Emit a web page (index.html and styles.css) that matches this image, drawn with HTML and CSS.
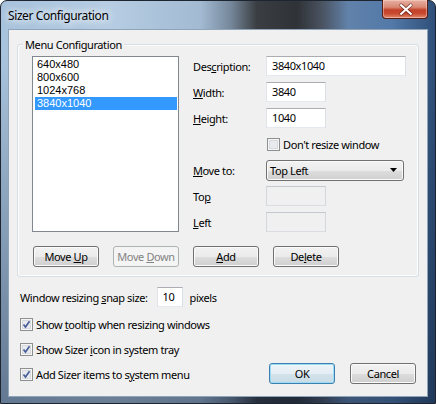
FILE: index.html
```html
<!DOCTYPE html>
<html>
<head>
<meta charset="utf-8">
<link rel="stylesheet" href="styles.css">
</head>
<body>
<div class="window">
  <div class="titlebar">
    <span class="title">Sizer Configuration</span>
    <div class="close">
      <svg width="46" height="19" viewBox="0 0 46 19">
        <path d="M19 5 L29 14 M29 5 L19 14" stroke="#3a0f08" stroke-width="4" stroke-linecap="round" opacity="0.55"/>
        <path d="M19 5 L29 14 M29 5 L19 14" stroke="#ffffff" stroke-width="2.2" stroke-linecap="square"/>
      </svg>
    </div>
  </div>
  <div class="client">
    <div class="group">
      <span class="group-title">Menu Configuration</span>
      <div class="group-top">
        <div class="listbox">
          <div class="item">640x480</div>
          <div class="item">800x600</div>
          <div class="item">1024x768</div>
          <div class="item sel">3840x1040</div>
        </div>
        <div class="form">
          <span class="lbl">Des<u>c</u>ription:</span>
          <div class="tb wide">3840x1040</div>
          <span class="lbl"><u>W</u>idth:</span>
          <div class="tb small">3840</div>
          <span class="lbl"><u>H</u>eight:</span>
          <div class="tb small">1040</div>
          <span></span>
          <div class="check">
            <svg class="cb" width="13" height="13" viewBox="0 0 13 13">
              <rect x="0.5" y="0.5" width="12" height="12" fill="#f6f6f6" stroke="#8e8f8f"/>
              <rect x="2" y="2" width="9" height="9" fill="#d6d9de"/>
              <rect x="3" y="3" width="7" height="7" fill="#e8eaed"/>
            </svg>
            <span>Don't resize window</span>
          </div>
          <span class="lbl"><u>M</u>ove to:</span>
          <div class="combo">
            <span>Top Left</span>
            <svg width="7" height="4" viewBox="0 0 7 4"><path d="M0 0 H7 L3.5 4 Z" fill="#000"/></svg>
          </div>
          <span class="lbl">To<u>p</u></span>
          <div class="tb small disabled"></div>
          <span class="lbl"><u>L</u>eft</span>
          <div class="tb small disabled"></div>
        </div>
      </div>
      <div class="btn-row">
        <button class="btn">Move <u>U</u>p</button>
        <button class="btn disabled">Move <u>D</u>own</button>
        <button class="btn"><u>A</u>dd</button>
        <button class="btn">De<u>l</u>ete</button>
      </div>
    </div>
    <div class="snap-row">
      <span>Window resizing <u>s</u>nap size:</span>
      <div class="tb snap">10</div>
      <span>pixels</span>
    </div>
    <div class="check row1">
      <svg class="cb" width="13" height="13" viewBox="0 0 13 13">
        <rect x="0.5" y="0.5" width="12" height="12" fill="#f6f6f6" stroke="#8e8f8f"/>
        <rect x="2" y="2" width="9" height="9" fill="#d6d9de"/>
        <rect x="3" y="3" width="7" height="7" fill="#e8eaed"/>
        <path d="M3.5 6.5 L5.5 9 L9.5 3.2" fill="none" stroke="#4a5e9a" stroke-width="1.7"/>
      </svg>
      <span>Show <u>t</u>ooltip when resizing windows</span>
    </div>
    <div class="check row2">
      <svg class="cb" width="13" height="13" viewBox="0 0 13 13">
        <rect x="0.5" y="0.5" width="12" height="12" fill="#f6f6f6" stroke="#8e8f8f"/>
        <rect x="2" y="2" width="9" height="9" fill="#d6d9de"/>
        <rect x="3" y="3" width="7" height="7" fill="#e8eaed"/>
        <path d="M3.5 6.5 L5.5 9 L9.5 3.2" fill="none" stroke="#4a5e9a" stroke-width="1.7"/>
      </svg>
      <span>Show Sizer <u>i</u>con in system tray</span>
    </div>
    <div class="bottom-row">
      <div class="check">
        <svg class="cb" width="13" height="13" viewBox="0 0 13 13">
          <rect x="0.5" y="0.5" width="12" height="12" fill="#f6f6f6" stroke="#8e8f8f"/>
          <rect x="2" y="2" width="9" height="9" fill="#d6d9de"/>
          <rect x="3" y="3" width="7" height="7" fill="#e8eaed"/>
          <path d="M3.5 6.5 L5.5 9 L9.5 3.2" fill="none" stroke="#4a5e9a" stroke-width="1.7"/>
        </svg>
        <span>Add Sizer items to s<u>y</u>stem menu</span>
      </div>
      <div class="dlg-btns">
        <button class="btn default">OK</button>
        <button class="btn">Cancel</button>
      </div>
    </div>
  </div>
</div>
</body>
</html>
```
FILE: styles.css
```css
body {
  margin: 0;
  font-family: "Noto Sans", "Open Sans", sans-serif;
  font-size: 11px;
  letter-spacing: -0.4px;
  color: #000;
}

.window {
  width: 436px;
  height: 404px;
  box-sizing: border-box;
  border: 1px solid #1c2530;
  border-radius: 7px 7px 0 0;
  padding: 0 7px 6px;
  display: flex;
  flex-direction: column;
  background:
    linear-gradient(to bottom, rgba(0,0,0,0) 0, rgba(0,0,0,0) 60px, rgba(15,30,55,0.45) 100%),
    linear-gradient(to right, #a7c2dc 0%, #b6cde3 25%, #a2bad2 46%, #75879a 53%, #3a3d41 59%, #2f3236 68%, #4a5361 74%, #6182aa 80%, #5279a8 90%, #2f4f78 100%);
}

.titlebar {
  height: 28px;
  display: flex;
  justify-content: space-between;
  align-items: center;
}

.title {
  font-size: 12px;
  padding-top: 1px;
  text-shadow: 0 0 6px #e8f1fa, 0 0 10px #e8f1fa, 0 0 14px rgba(255,255,255,0.8);
}

.close {
  align-self: flex-start;
  margin-top: -1px;
  width: 46px;
  height: 19px;
  box-sizing: border-box;
  border: 1px solid #5a1d14;
  border-top: none;
  border-radius: 0 0 4px 4px;
  background: linear-gradient(to bottom, #e7b0a3 0%, #d98873 40%, #c3412a 55%, #c9492f 75%, #e08a6c 100%);
  box-shadow: inset 0 0 0 1px rgba(255,220,210,0.45);
  display: flex;
}

.client {
  flex: 1;
  background: #f0f0f0;
  border: 1px solid #8fa3b9;
  padding: 14px 8px 0 8px;
  display: flex;
  flex-direction: column;
}

.group {
  position: relative;
  border: 1px solid #d5dfe5;
  border-radius: 3px;
  box-shadow: inset 0 0 0 1px #fcfcfc;
  padding: 11px 11px 9px 14px;
}

.group-title {
  position: absolute;
  top: -8px;
  left: 5px;
  padding: 0 2px;
  line-height: 15px;
  background: #f0f0f0;
}

.group-top {
  display: flex;
  gap: 14px;
  height: 176px;
}

.listbox {
  width: 147px;
  height: 176px;
  box-sizing: border-box;
  border: 1px solid #828790;
  background: #fff;
  padding: 1px 1px;
}

.item {
  height: 13px;
  line-height: 13px;
  padding-left: 2px;
  margin-left: 1px;
  white-space: nowrap;
  font-family: "Liberation Sans", Arial, sans-serif;
  font-size: 11px;
  letter-spacing: 0;
}

.item.sel {
  background: #3399ff;
  color: #fff;
}

.form {
  display: grid;
  grid-template-columns: 73px auto;
  grid-auto-rows: 20px;
  row-gap: 6px;
  align-items: center;
  align-content: start;
}

.tb {
  height: 20px;
  box-sizing: border-box;
  border: 1px solid;
  border-color: #abadb3 #dbdfe6 #e3e9ef #e2e3ea;
  background: #fff;
  padding-left: 5px;
  line-height: 18px;
}

.tb.wide { width: 140px; }
.tb.small { width: 60px; }
.tb.snap { width: 26px; padding-left: 5px; }

.tb.disabled {
  background: #f0f0f0;
  border-color: #c3c8ce #d4d8dc #d9dde1 #d4d8dc;
}

.check {
  display: flex;
  align-items: center;
  gap: 3px;
  padding-left: 1px;
  white-space: nowrap;
}

.cb { flex: none; display: block; }

.combo {
  width: 138px;
  height: 21px;
  box-sizing: border-box;
  border: 1px solid #707070;
  border-radius: 3px;
  background: linear-gradient(to bottom, #f2f2f2 0%, #ebebeb 50%, #dddddd 51%, #cfcfcf 100%);
  box-shadow: inset 0 0 0 1px #fbfbfb;
  display: flex;
  align-items: center;
  justify-content: space-between;
  padding: 0 6px 0 3px;
}

.combo svg { display: block; }

.btn-row {
  display: flex;
  gap: 14px;
  margin-top: 14px;
  padding-left: 1px;
}

.btn {
  width: 66px;
  height: 21px;
  box-sizing: border-box;
  border: 1px solid #707070;
  border-radius: 3px;
  background: linear-gradient(to bottom, #f2f2f2 0%, #ebebeb 50%, #dddddd 51%, #cfcfcf 100%);
  box-shadow: inset 0 0 0 1px #fbfbfb;
  font-family: inherit;
  font-size: 11px;
  letter-spacing: -0.4px;
  color: #000;
  padding: 0;
  line-height: 18px;
  text-align: center;
  white-space: nowrap;
}

.btn.disabled {
  border-color: #adb2b5;
  background: #f4f4f4;
  box-shadow: none;
  color: #838383;
}

.btn.default {
  border-color: #3c7fb1;
  box-shadow: inset 0 0 0 1px #9ddcf3;
  background: linear-gradient(to bottom, #eef5f9 0%, #e4eef4 50%, #d4e3eb 51%, #c8dbe5 100%);
}

.snap-row {
  display: flex;
  align-items: center;
  height: 20px;
  margin-top: 10px;
  padding-left: 3px;
  gap: 7px;
}

.snap-row .tb { margin-left: 2px; }

.row1 {
  height: 20px;
  margin-top: 7px;
  padding-left: 3px;
}

.row2 {
  height: 20px;
  margin-top: 5px;
  padding-left: 3px;
}

.bottom-row {
  display: flex;
  align-items: center;
  justify-content: space-between;
  height: 21px;
  margin-top: 4px;
  padding-left: 3px;
  padding-right: 3px;
}

.bottom-row .check { padding-left: 0; padding-top: 1px; }

.dlg-btns {
  display: flex;
  gap: 15px;
}
```
